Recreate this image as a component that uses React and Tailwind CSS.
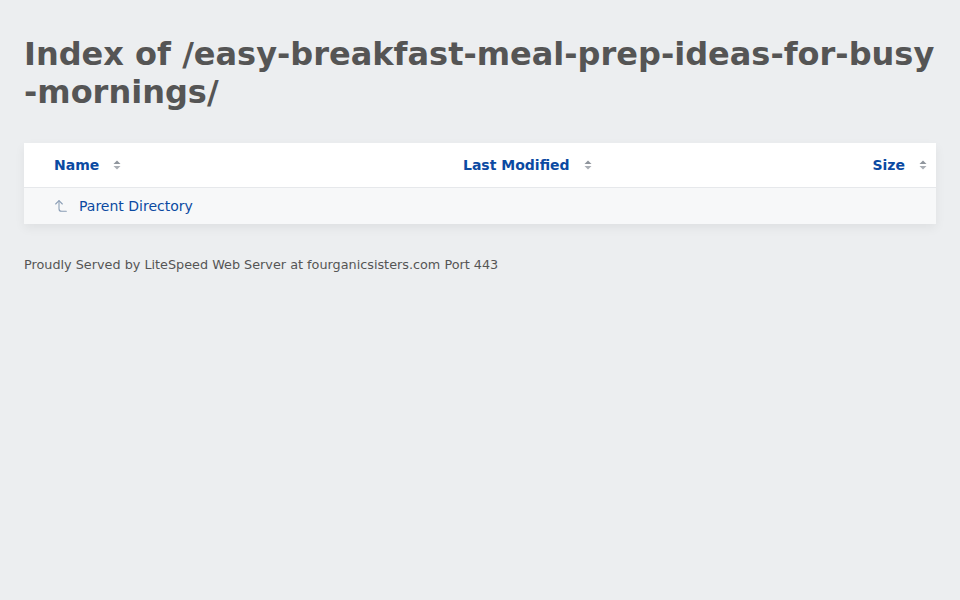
import { CornerLeftUp } from "lucide-react";

function SortIcon() {
  return (
    <svg width="8" height="10" viewBox="0 0 8 10" className="ml-[14px] inline-block">
      <path d="M4 0.5 7.5 4H0.5z" fill="#8f959c" />
      <path d="M4 9.5 7.5 6H0.5z" fill="#a9aeb4" />
    </svg>
  );
}

export default function App() {
  return (
    <div className="min-h-screen bg-[#eceef0] px-6 pt-[35px] text-[#555]" style={{ fontFamily: '"DejaVu Sans", Verdana, sans-serif' }}>
      <h1 className="break-all text-[32px] font-bold leading-[38px] text-[#555]">
        Index of /easy-breakfast-meal-prep-ideas-for-busy-mornings/
      </h1>

      <div className="mt-[32px] bg-white shadow-[0_4px_10px_rgba(0,0,0,0.06)]">
        <div className="flex h-[45px] items-center border-b border-[#e6e8eb] text-[14px] font-bold text-[#0b4aa2]">
          <div className="flex w-[439px] items-center pl-[30px]">
            Name
            <SortIcon />
          </div>
          <div className="flex flex-1 items-center">
            Last Modified
            <SortIcon />
          </div>
          <div className="flex items-center pr-[9px]">
            Size
            <SortIcon />
          </div>
        </div>
        <div className="flex h-[36px] items-center bg-[#f7f8f9] pl-[29px] text-[14px] text-[#0b4aa2]">
          <CornerLeftUp size={16} strokeWidth={1.6} className="mr-[10px] text-[#8a9db5]" />
          <span>Parent Directory</span>
        </div>
      </div>

      <p className="mt-[31px] text-[12.8px] text-[#555]">
        Proudly Served by LiteSpeed Web Server at fourganicsisters.com Port 443
      </p>
    </div>
  );
}
